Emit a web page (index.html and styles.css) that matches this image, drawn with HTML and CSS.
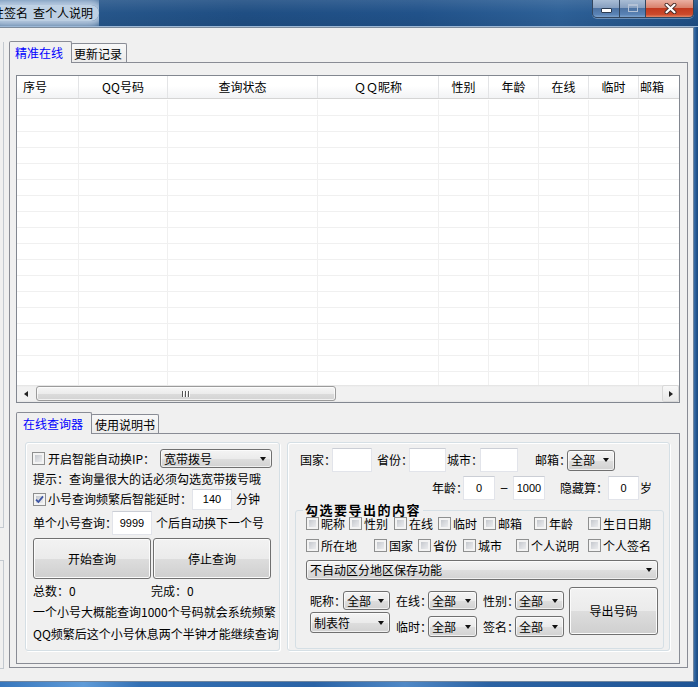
FILE: index.html
```html
<!DOCTYPE html>
<html lang="zh-CN">
<head>
<meta charset="utf-8">
<title>查个人说明</title>
<link rel="stylesheet" href="styles.css">
</head>
<body>
<div class="window">
  <header class="titlebar">
    <div class="title"><span class="title-glow"><span>性签名</span><span>查个人说明</span></span></div>
    <div class="caption">
      <div class="cbtn cbtn-min"><span class="min-glyph"></span></div>
      <div class="cbtn cbtn-max"><span class="max-glyph"></span></div>
      <div class="cbtn cbtn-close"><svg class="close-glyph" width="13" height="11" viewBox="0 0 13 11"><path d="M2.5 1.8 L10.5 9.2 M10.5 1.8 L2.5 9.2" stroke="#4a2e2a" stroke-width="4" stroke-linecap="round" fill="none"/><path d="M2.5 1.8 L10.5 9.2 M10.5 1.8 L2.5 9.2" stroke="#ffffff" stroke-width="2.2" stroke-linecap="round" fill="none"/></svg></div>
    </div>
  </header>

  <div class="frame-mid">
    <div class="client">
      <div class="edge">
        <div class="edge-a"></div>
        <div class="edge-b"></div>
      </div>

      <div class="tabctl">
        <div class="tabstrip main-strip">
          <div class="tab tab-active">精准在线</div>
          <div class="tab">更新记录</div>
        </div>
        <div class="tabpanel main-panel">
          <div class="listview">
            <div class="lv-head">
              <div class="col c1">序号</div>
              <div class="col c2">QQ号码</div>
              <div class="col c3">查询状态</div>
              <div class="col c4">ＱＱ昵称</div>
              <div class="col c5">性别</div>
              <div class="col c6">年龄</div>
              <div class="col c7">在线</div>
              <div class="col c8">临时</div>
              <div class="col c9">邮箱</div>
            </div>
            <div class="lv-body">
              <div class="col c1"></div>
              <div class="col c2"></div>
              <div class="col c3"></div>
              <div class="col c4"></div>
              <div class="col c5"></div>
              <div class="col c6"></div>
              <div class="col c7"></div>
              <div class="col c8"></div>
              <div class="col c9"></div>
            </div>
            <div class="hscroll">
              <div class="sb-btn"><span class="tri-left"></span></div>
              <div class="sb-thumb"><span class="grip"></span></div>
              <div class="sb-track"></div>
              <div class="sb-btn sb-btn-right"><span class="tri-right"></span></div>
            </div>
          </div>

          <div class="tabstrip sub-strip">
            <div class="tab tab-active">在线查询器</div>
            <div class="tab">使用说明书</div>
          </div>
          <div class="tabpanel sub-panel">
            <div class="group lgroup">
              <div class="row lg-r1">
                <span class="cb"></span>
                <span class="lab ml3 w112">开启智能自动换IP：</span>
                <div class="combo w112 h19"><span class="txt">宽带拨号</span><span class="dd"></span></div>
              </div>
              <div class="row lg-r2">提示：查询量很大的话必须勾选宽带拨号哦</div>
              <div class="row lg-r3">
                <span class="cb"><svg width="9" height="9" viewBox="0 0 9 9"><path d="M1 4.6 L3.4 7 L8 1.4" fill="none" stroke="#3c54a4" stroke-width="1.8"/></svg></span>
                <span class="lab ml2 w144">小号查询频繁后智能延时：</span>
                <div class="tb w40 h21">140</div>
                <span class="lab ml4">分钟</span>
              </div>
              <div class="row lg-r4">
                <span class="lab w79">单个小号查询：</span>
                <div class="tb w40 h24">9999</div>
                <span class="lab ml4">个后自动换下一个号</span>
              </div>
              <div class="row lg-btns">
                <div class="btn w118 h41">开始查询</div>
                <div class="btn w118 h41">停止查询</div>
              </div>
              <div class="row lg-r5">
                <span class="lab w118">总数：0</span>
                <span class="lab">完成：0</span>
              </div>
              <div class="row lg-r6">一个小号大概能查询1000个号码就会系统频繁</div>
              <div class="row lg-r7">QQ频繁后这个小号休息两个半钟才能继续查询</div>
            </div>

            <div class="group rgroup">
              <div class="row rg-r1">
                <span class="lab w32">国家：</span>
                <div class="tb w40 h24"></div>
                <span class="lab ml5 w32">省份：</span>
                <div class="tb w37 h24"></div>
                <span class="lab ml1 w33">城市：</span>
                <div class="tb w38 h24"></div>
                <span class="lab ml17 w32">邮箱：</span>
                <div class="combo w48 h21"><span class="txt">全部</span><span class="dd"></span></div>
              </div>
              <div class="row rg-r2">
                <span class="lab ml132 w31">年龄：</span>
                <div class="tb w32 h24">0</div>
                <span class="lab dash w18">–</span>
                <div class="tb w32 h24">1000</div>
                <span class="lab ml15 w48">隐藏算：</span>
                <div class="tb w31 h24">0</div>
                <span class="lab ml1">岁</span>
              </div>
              <fieldset class="export">
                <legend>勾选要导出的内容</legend>
                <div class="ck-row ck-a">
                  <span class="ck"><span class="cb"></span>昵称</span>
                  <span class="ck"><span class="cb"></span>性别</span>
                  <span class="ck"><span class="cb"></span>在线</span>
                  <span class="ck"><span class="cb"></span>临时</span>
                  <span class="ck"><span class="cb"></span>邮箱</span>
                  <span class="ck"><span class="cb"></span>年龄</span>
                  <span class="ck"><span class="cb"></span>生日日期</span>
                </div>
                <div class="ck-row ck-b">
                  <span class="ck"><span class="cb"></span>所在地</span>
                  <span class="ck"><span class="cb"></span>国家</span>
                  <span class="ck"><span class="cb"></span>省份</span>
                  <span class="ck"><span class="cb"></span>城市</span>
                  <span class="ck"><span class="cb"></span>个人说明</span>
                  <span class="ck"><span class="cb"></span>个人签名</span>
                </div>
                <div class="combo combo-wide"><span class="txt">不自动区分地区保存功能</span><span class="dd"></span></div>
                <div class="ctrls">
                  <div class="ctrl-left">
                    <div class="row ctrl-a">
                      <span class="lab ml4 w33">昵称：</span>
                      <div class="combo w47 h19"><span class="txt">全部</span><span class="dd"></span></div>
                      <span class="lab ml6 w32">在线：</span>
                      <div class="combo w49 h19"><span class="txt">全部</span><span class="dd"></span></div>
                      <span class="lab ml6 w32">性别：</span>
                      <div class="combo w49 h19"><span class="txt">全部</span><span class="dd"></span></div>
                    </div>
                    <div class="row ctrl-b">
                      <div class="combo combo-tab ml4 w80 h21"><span class="txt">制表符</span><span class="dd"></span></div>
                      <span class="lab lab-b ml6 w32">临时：</span>
                      <div class="combo w49 h21"><span class="txt">全部</span><span class="dd"></span></div>
                      <span class="lab lab-b ml6 w32">签名：</span>
                      <div class="combo w49 h21"><span class="txt">全部</span><span class="dd"></span></div>
                    </div>
                  </div>
                  <div class="btn btn-export">导出号码</div>
                </div>
              </fieldset>
            </div>
          </div>
        </div>
      </div>
    </div>
    <div class="frame-right"></div>
  </div>
  <div class="frame-bottom"></div>
</div>
</body>
</html>
```

FILE: styles.css
```css
* { box-sizing: border-box; }
html, body { margin: 0; padding: 0; }
body {
  width: 698px; height: 687px; overflow: hidden;
  background: #1f5590;
  font-family: "Noto Sans CJK SC", "Noto Sans", sans-serif;
  font-size: 12px; line-height: 16px; color: #000;
}
.window { width: 698px; height: 687px; display: flex; flex-direction: column; }

/* title bar */
.titlebar {
  flex: none; height: 27px; display: flex; align-items: flex-start;
  border-bottom: 1px solid #9db8d6;
  background:
    linear-gradient(180deg, rgba(255,255,255,.10), rgba(255,255,255,0) 50%, rgba(0,0,0,.06)),
    linear-gradient(90deg, #2b5b8f 0%, #1f4e83 35%, #21528a 60%, #2d6097 80%, #1f4f85 100%);
}
.title { height: 26px; display: flex; align-items: center; overflow: hidden; }
.title-glow {
  display: flex; align-items: center; gap: 5px; margin-left: -8px; padding-right: 6px;
  height: 16px; line-height: 16px; white-space: nowrap;
  background: rgba(222,234,247,.82);
  box-shadow: 0 0 8px 6px rgba(222,234,247,.8);
  border-radius: 8px;
}
.caption {
  margin-left: auto; margin-right: 4px; display: flex; height: 18px;
  border: 1px solid #33465e; border-top: 0; border-radius: 0 0 5px 5px; overflow: hidden;
  box-shadow: 0 1px 0 rgba(190,210,235,.45);
}
.cbtn { height: 17px; display: flex; justify-content: center; align-items: flex-start; border-right: 1px solid #33465e; }
.cbtn-min, .cbtn-max {
  background: linear-gradient(180deg, #a9bdd5 0%, #87a0c0 45%, #4d73a3 50%, #5a83b5 85%, #7ea4cf 100%);
}
.cbtn-min { width: 27px; }
.cbtn-max { width: 26px; }
.cbtn-close {
  width: 47px; border-right: 0;
  background: linear-gradient(180deg, #eab0a2 0%, #d9826c 45%, #c23a1f 50%, #cc4a2c 85%, #e38a6a 100%);
}
.min-glyph { margin-top: 8px; width: 11px; height: 5px; background: #fff; border: 1px solid #2c3c52; border-radius: 1px; }
.max-glyph { margin-top: 4px; width: 10px; height: 8px; border: 1px solid #b4c2d6; border-top-width: 2px; }
.close-glyph { margin-top: 3px; margin-left: 2px; }

/* frame */
.frame-mid { flex: none; height: 655px; display: flex; }
.client {
  flex: none; width: 694px; height: 655px; background: #f0f0f0;
  border-top: 1px solid #7d8b9b; border-right: 1px solid #6f859e; border-bottom: 1px solid #6f859e;
  display: flex; align-items: flex-start;
}
.frame-right { flex: none; width: 4px; background: linear-gradient(90deg, #3c70aa, #24568f 60%, #1b4a80); }
.frame-bottom {
  flex: none; height: 5px;
  background: linear-gradient(90deg, #3777bd 0%, #5f9bd8 12%, #3370b4 20%, #2a63a6 45%, #4f88c6 58%, #2b62a3 70%, #1f5596 100%);
}

.edge { flex: none; width: 9px; display: flex; flex-direction: column; }
.edge-a { margin-top: 14px; width: 4px; height: 486px; border-right: 1px solid #c3c9d0; border-bottom: 1px solid #c3c9d0; }
.edge-b { margin-top: 32px; width: 4px; height: 109px; border: 1px solid #c3c9d0; border-left: 0; }

/* tabs */
.tabctl { flex: none; margin-top: 13px; width: 679px; }
.tabstrip { display: flex; align-items: flex-end; height: 21px; }
.tab {
  height: 19px; margin-left: -1px; padding: 2px 4px 0 2px;
  border: 1px solid #898c95; border-bottom: 0; border-radius: 2px 2px 0 0;
  background: linear-gradient(180deg, #f8f8f8, #ebebeb);
  line-height: 16px; white-space: nowrap;
}
.tab-active {
  height: 22px; margin-left: 0; margin-bottom: -1px; padding: 3px 8px 0 5px;
  background: #f0f0f0; color: #0000ff; position: relative; z-index: 1;
}
.sub-strip { margin-top: 9px; }
.sub-strip .tab { padding: 2px 3px 0 3px; }
.sub-strip .tab-active { padding: 3px 8px 0 6px; }

.tabpanel { border: 1px solid #898c95; background: #f0f0f0; }
.main-panel { height: 606px; padding: 12px 7px 3px 6px; }

/* list view */
.listview {
  width: 664px; height: 328px; border: 1px solid #828790; background: #fff;
  display: flex; flex-direction: column; overflow: hidden;
}
.lv-head {
  flex: none; height: 23px; display: flex; border-bottom: 1px solid #d5d5d5;
  background: linear-gradient(180deg, #ffffff 0%, #ffffff 45%, #f2f3f5 100%);
}
.col { flex: none; border-right: 1px solid #f0f0f0; }
.lv-head .col {
  display: flex; align-items: center; justify-content: center;
  border-right: 1px solid #e3e4e6; white-space: nowrap;
}
.c1 { width: 62px; } .c2 { width: 89px; } .c3 { width: 150px; } .c4 { width: 121px; }
.c5, .c6, .c7, .c8 { width: 50px; } .c9 { width: 80px; }
.lv-head .c1 { justify-content: flex-start; padding-left: 6px; }
.lv-head .c9 { justify-content: flex-start; padding-left: 1px; }
.lv-body {
  flex: none; height: 286px; display: flex; padding-top: 1px;
  background: repeating-linear-gradient(180deg, transparent 0 15px, #f0f0f0 15px 16px);
  background-origin: content-box; background-clip: content-box;
}
.hscroll {
  flex: none; height: 17px; display: flex; align-items: center;
  background: linear-gradient(180deg, #e2e2e2 0, #f1f1f1 2px, #f1f1f1 15px, #e6e6e6 17px);
}
.sb-btn { flex: none; width: 17px; height: 17px; display: flex; align-items: center; justify-content: center; }
.sb-btn-right { border: 1px solid #d8d8d8; border-radius: 2px; background: linear-gradient(180deg, #f8f8f8, #e8e8e8); }
.tri-left { width: 0; height: 0; border-top: 3.5px solid transparent; border-bottom: 3.5px solid transparent; border-right: 4px solid #222; }
.tri-right { width: 0; height: 0; border-top: 3.5px solid transparent; border-bottom: 3.5px solid transparent; border-left: 4px solid #222; }
.sb-thumb {
  flex: none; margin-left: 2px; width: 300px; height: 15px;
  border: 1px solid #9b9b9b; border-radius: 3px;
  background: linear-gradient(180deg, #f6f6f6 0%, #ececec 50%, #dcdcdc 51%, #d3d3d3 100%);
  box-shadow: inset 0 0 0 1px rgba(255,255,255,.7);
  display: flex; align-items: center; justify-content: center;
}
.grip { width: 8px; height: 6px; background: repeating-linear-gradient(90deg, #555 0 1px, #fff 1px 2px, transparent 2px 3px); }
.sb-track { flex: 1; }

/* bottom panel */
.sub-panel { width: 664px; height: 231px; padding: 8px 9px 12px 8px; display: flex; gap: 7px; }
.group {
  flex: none; height: 209px; border: 1px solid #d5dfe5; border-radius: 3px;
  box-shadow: inset 1px 1px 0 #fff, 1px 1px 0 #fff;
}
.lgroup { width: 255px; padding: 5px 0 0 6px; }
.rgroup { width: 383px; padding: 5px 0 0 12px; }

.row { display: flex; align-items: center; white-space: nowrap; }
.lg-r1 { height: 21px; }
.lg-r2 { height: 19px; padding-left: 1px; }
.lg-r3 { height: 22px; padding-left: 1px; }
.lg-r4 { height: 26px; padding-left: 1px; }
.lg-btns { margin-top: 2px; padding-left: 1px; gap: 2px; }
.lg-r5 { height: 23px; padding-left: 1px; }
.lg-r6 { height: 19px; padding-left: 1px; }
.lg-r7 { height: 25px; padding-left: 1px; }

.rg-r1 { height: 24px; }
.rg-r2 { height: 24px; margin-top: 4px; }

.lab { flex: none; white-space: nowrap; }
.dash { text-align: center; font-family: "Liberation Sans", sans-serif; }

/* controls */
.cb {
  flex: none; width: 13px; height: 13px; border: 1px solid #8e8f8f;
  background: linear-gradient(135deg, #b8bcc2 0%, #d9dbdf 50%, #f4f4f5 100%);
  box-shadow: inset 0 0 0 2px #f3f3f3;
  display: flex; align-items: center; justify-content: center;
}
.tb {
  flex: none; background: #fff;
  border: 1px solid #e2e4ea; border-top-color: #cbced5;
  display: flex; align-items: center; justify-content: center;
  font-family: "Liberation Sans", sans-serif; font-size: 11px;
}
.combo {
  flex: none; display: flex; align-items: center; padding-left: 3px;
  border: 1px solid #707070; border-radius: 3px;
  background: linear-gradient(180deg, #f4f4f4 0%, #ebebeb 50%, #dedede 51%, #d2d2d2 100%);
  box-shadow: inset 0 0 0 1px rgba(255,255,255,.65);
  white-space: nowrap;
}
.combo .txt { flex: 1; overflow: hidden; }
.combo .dd {
  flex: none; width: 0; height: 0; margin-right: 5px;
  border-left: 3.5px solid transparent; border-right: 3.5px solid transparent; border-top: 4px solid #111;
}
.btn {
  flex: none; display: flex; align-items: center; justify-content: center;
  border: 1px solid #707070; border-radius: 3px;
  background: linear-gradient(180deg, #f2f2f2 0%, #ebebeb 50%, #dddddd 51%, #cfcfcf 100%);
  box-shadow: inset 0 0 0 1px #fbfbfb;
}

/* export fieldset */
.export {
  margin: 4px 0 0 -5px; width: 369px; height: 145px; min-width: 0;
  padding: 0 0 0 10px; border: 1px solid #d5dfe5; border-radius: 3px;
}
.export legend {
  padding: 0 2px; margin-left: -3px;
  font-size: 13px; font-weight: bold; line-height: 12px; letter-spacing: 1.5px;
}
.ck-row { display: grid; height: 13px; align-items: center; line-height: 13px; }
.ck-a { margin-top: 1px; grid-template-columns: 43px 45px 44px 45px 51px 54px auto; }
.ck-b { margin-top: 9px; grid-template-columns: 68px 44px 45px 53px 72px auto; }
.ck { display: flex; align-items: center; height: 13px; line-height: 13px; white-space: nowrap; }
.ck .cb { margin-right: 2px; }
.combo-wide { margin-top: 8px; width: 352px; height: 20px; }
.ctrls { margin-top: 7px; display: flex; }
.ctrl-left { flex: none; width: 258px; }
.ctrl-a { margin-top: 4px; height: 19px; }
.ctrl-b { margin-top: 2px; height: 25px; align-items: flex-end; }
.lab-b { height: 21px; line-height: 21px; }
.combo-tab { align-self: flex-start; }
.btn-export { margin-left: 5px; width: 89px; height: 48px; }

/* sizing utilities */
.w18 { width: 18px; } .w31 { width: 31px; } .w32 { width: 32px; } .w33 { width: 33px; }
.w37 { width: 37px; } .w38 { width: 38px; } .w40 { width: 40px; } .w47 { width: 47px; }
.w48 { width: 48px; } .w49 { width: 49px; } .w79 { width: 79px; } .w80 { width: 80px; }
.w112 { width: 112px; } .w118 { width: 118px; } .w144 { width: 144px; }
.h19 { height: 19px; } .h21 { height: 21px; } .h24 { height: 24px; } .h41 { height: 41px; }
.ml1 { margin-left: 1px; } .ml2 { margin-left: 2px; } .ml3 { margin-left: 3px; } .ml4 { margin-left: 4px; }
.ml5 { margin-left: 5px; } .ml6 { margin-left: 6px; } .ml15 { margin-left: 15px; } .ml17 { margin-left: 17px; }
.ml132 { margin-left: 132px; }
```
